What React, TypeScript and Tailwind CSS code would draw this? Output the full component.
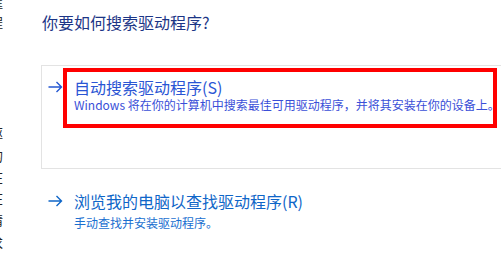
const Arrow = ({ color }: { color: string }) => (
  <svg width="15" height="12" viewBox="0 0 15 12" fill="none" stroke={color} strokeWidth="1.4">
    <path d="M0.5 6h13M8.5 1l5 5-5 5" />
  </svg>
);

const Fragment = ({ ch, className = "" }: { ch: string; className?: string }) => (
  <div className={`h-[14px] w-[3px] overflow-hidden ${className}`}>
    <div className="-ml-[10px] w-[13px] text-[13px] leading-[14px] text-[#222]">{ch}</div>
  </div>
);

export default function App() {
  return (
    <div className="flex h-[255px] w-[501px] flex-row overflow-hidden bg-white font-['Noto_Sans_CJK_SC','Microsoft_YaHei',sans-serif]">
      <div className="flex w-[41px] shrink-0 flex-col">
        <Fragment ch="框" className="-mt-1" />
        <Fragment ch="程" className="mt-[5px]" />
        <Fragment ch="驱" className="mt-[97px]" />
        <Fragment ch="的" className="mt-[9px]" />
        <Fragment ch="在" className="mt-[7px]" />
        <Fragment ch="在" className="mt-[7px]" />
        <Fragment ch="请" className="mt-[8px]" />
        <Fragment ch="求" className="mt-[9px]" />
      </div>
      <div className="flex w-[480px] shrink-0 flex-col">
        <h1 className="ml-[1px] mt-[11px] text-[16px] leading-[22px] text-[#1c3586]">
          你要如何搜索驱动程序?
        </h1>
        <div className="mt-[32px] flex h-[104px] flex-row items-start border border-r-0 border-[#e3e3e3] pl-[6px] pt-[2px]">
          <div className="mt-[13px] flex h-[12px] w-[15px] shrink-0 items-center">
            <Arrow color="#2457d2" />
          </div>
          <div className="h-[60px] w-[434px] shrink-0 border-4 border-[#ff0000] pl-[7px] pt-[5px]">
            <div className="whitespace-nowrap text-[16px] leading-[20px] text-[#2a55d4]">
              自动搜索驱动程序(S)
            </div>
            <div className="whitespace-nowrap text-[12px] leading-[16px] text-[#3a4fd8]">
              Windows 将在你的计算机中搜索最佳可用驱动程序，并将其安装在你的设备上。
            </div>
          </div>
        </div>
        <div className="mt-[22px] flex flex-row items-start pl-[7px]">
          <div className="mt-[4px] flex h-[12px] w-[26px] shrink-0 items-center">
            <Arrow color="#0f66c8" />
          </div>
          <div className="flex flex-col">
            <div className="whitespace-nowrap text-[16px] leading-[20px] text-[#0f66c8]">
              浏览我的电脑以查找驱动程序(R)
            </div>
            <div className="mt-[4px] whitespace-nowrap text-[12px] leading-[16px] text-[#1a6fd0]">
              手动查找并安装驱动程序。
            </div>
          </div>
        </div>
      </div>
    </div>
  );
}
